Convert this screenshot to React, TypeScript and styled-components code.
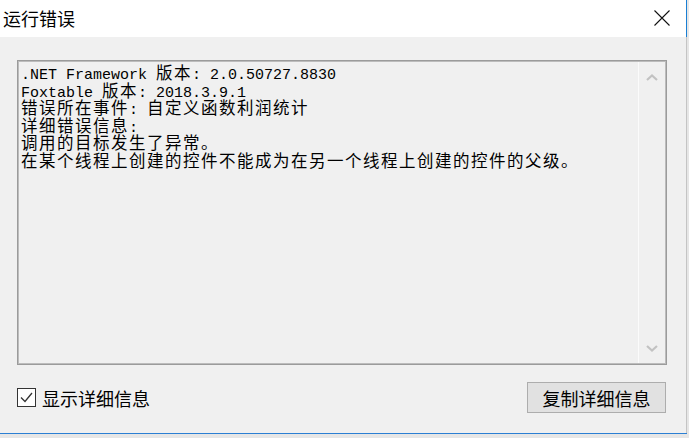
import React from 'react';
import styled, { createGlobalStyle } from 'styled-components';

const GlobalStyle = createGlobalStyle`
  html, body {
    margin: 0;
    padding: 0;
    background: #e6e6e6;
  }
  body {
    font-family: "Noto Sans CJK SC", "Liberation Sans", sans-serif;
    color: #000;
  }
`;

const lines = [
  '.NET Framework 版本: 2.0.50727.8830',
  'Foxtable 版本: 2018.3.9.1',
  '错误所在事件: 自定义函数利润统计',
  '详细错误信息:',
  '调用的目标发生了异常。',
  '在某个线程上创建的控件不能成为在另一个线程上创建的控件的父级。',
];

const CJK = /([\u3000-\u9fff\uff00-\uffef]+)/;

const renderLine = (text: string) =>
  text.split(CJK).map((part, i) =>
    CJK.test(part) ? <Wide key={i}>{part}</Wide> : <span key={i}>{part}</span>
  );

const App = () => {
  return (
    <>
      <GlobalStyle />
      <Window>
        <TitleBar>
          <Title>运行错误</Title>
          <Close viewBox="0 0 16 16">
            <path d="M0.5 0.5 L15.5 15.5 M15.5 0.5 L0.5 15.5" />
          </Close>
        </TitleBar>
        <Body>
          <Detail>
            <Content>
              {lines.map((l, i) => (
                <Line key={i}>{renderLine(l)}</Line>
              ))}
            </Content>
            <ScrollBar>
              <Arrow viewBox="0 0 12 7">
                <polyline points="1,6 6,1.5 11,6" />
              </Arrow>
              <Arrow viewBox="0 0 12 7">
                <polyline points="1,1 6,5.5 11,1" />
              </Arrow>
            </ScrollBar>
          </Detail>
          <Footer>
            <CheckLabel>
              <Box>
                <svg viewBox="0 0 17 17" width="17" height="17">
                  <polyline points="3,8.5 7,12.5 14,4" />
                </svg>
              </Box>
              显示详细信息
            </CheckLabel>
            <Button>复制详细信息</Button>
          </Footer>
        </Body>
      </Window>
    </>
  );
};

const Window = styled.div`
  width: 687px;
  height: 434px;
  box-sizing: border-box;
  display: flex;
  flex-direction: column;
  border-bottom: 1px solid #2b7fd3;
`;

const TitleBar = styled.div`
  height: 37px;
  flex: none;
  background: #fff;
  border-right: 1px solid #1a7fd4;
  display: flex;
  align-items: center;
  justify-content: space-between;
  padding: 0 16px 0 3px;
`;

const Title = styled.div`
  font-size: 18px;
  line-height: 20px;
  margin-top: -1px;
`;

const Close = styled.svg`
  width: 16px;
  height: 16px;
  margin-top: -2px;
  stroke: #111;
  stroke-width: 1.1;
  fill: none;
`;

const Body = styled.div`
  flex: 1;
  background: #f0f0f0;
  border-right: 1px solid #c4c4c4;
  padding: 23px 19px 0 17px;
  display: flex;
  flex-direction: column;
`;

const Detail = styled.div`
  height: 305px;
  box-sizing: border-box;
  border: 1px solid #9b9b9b;
  box-shadow: inset 0 0 0 1px #bcbcbc;
  display: flex;
`;

const Content = styled.div`
  flex: 1;
  padding: 3px 3px;
  font-family: "Liberation Mono", "Noto Sans CJK SC", monospace;
  font-size: 15px;
  overflow: hidden;
`;

const Line = styled.div`
  height: 17.5px;
  line-height: 17.5px;
  white-space: pre;
`;

const Wide = styled.span`
  display: inline-block;
  height: 17.5px;
  line-height: 17.5px;
  font-family: "Noto Sans CJK SC", sans-serif;
  font-size: 16.5px;
  letter-spacing: 1.5px;
`;

const ScrollBar = styled.div`
  width: 26px;
  margin: 1px 1px 1px 0;
  border-left: 1px solid #fbfbfb;
  display: flex;
  flex-direction: column;
  align-items: center;
  justify-content: space-between;
  padding: 12px 0 11px;
`;

const Arrow = styled.svg`
  width: 12px;
  height: 7px;
  fill: none;
  stroke: #c2c2c2;
  stroke-width: 2.2;
`;

const Footer = styled.div`
  margin-top: 17px;
  height: 31px;
  display: flex;
  align-items: center;
  justify-content: space-between;
`;

const CheckLabel = styled.label`
  display: flex;
  align-items: center;
  gap: 6px;
  font-size: 18px;
  line-height: 20px;
`;

const Box = styled.span`
  width: 17px;
  height: 17px;
  border: 1px solid #333;
  background: #fff;
  display: flex;

  polyline {
    fill: none;
    stroke: #333;
    stroke-width: 1.3;
  }
`;

const Button = styled.button`
  width: 139px;
  height: 31px;
  margin-right: 1px;
  padding: 0;
  border: 1px solid #adadad;
  background: #e1e1e1;
  font-family: "Noto Sans CJK SC", sans-serif;
  font-size: 18px;
  line-height: 20px;
  color: #000;
`;

export default App;
